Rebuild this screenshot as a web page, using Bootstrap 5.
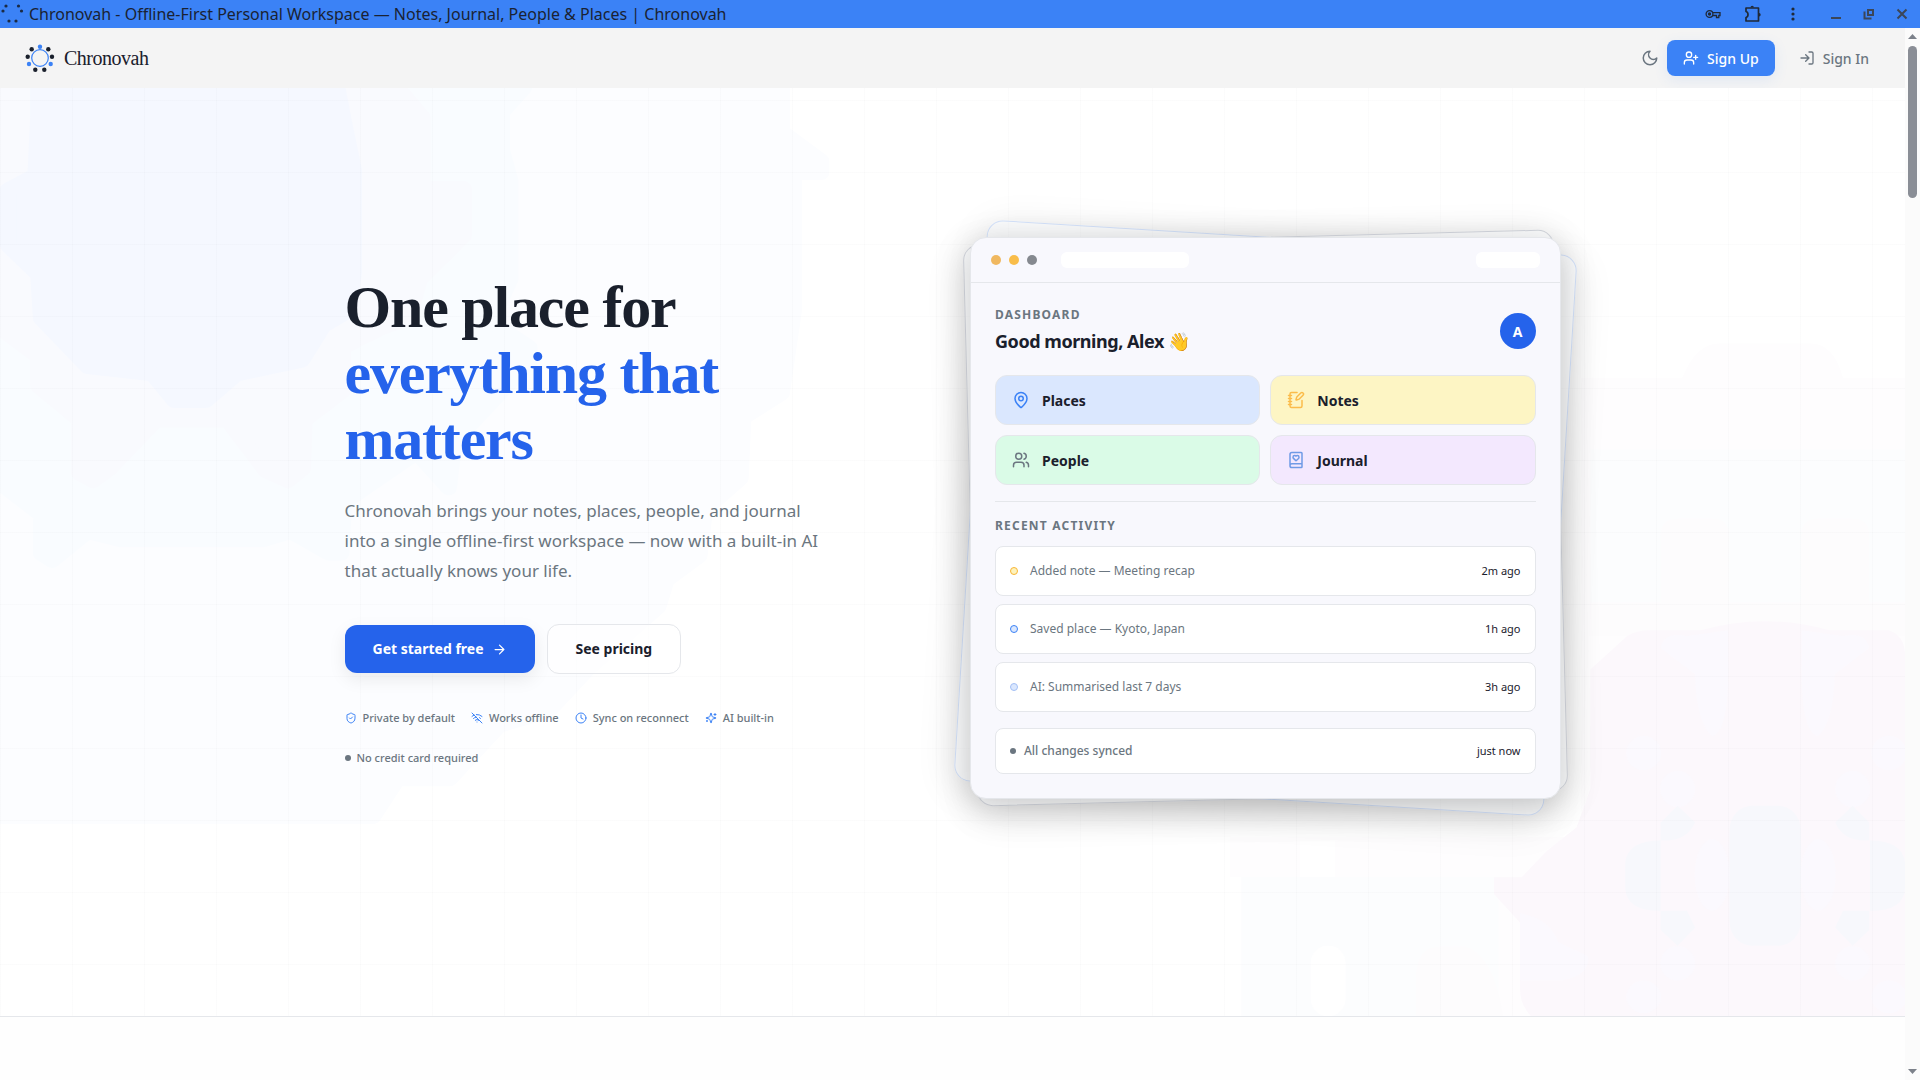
<!DOCTYPE html>
<html lang="en">
<head>
<meta charset="utf-8">
<meta name="viewport" content="width=device-width, initial-scale=1">
<title>Chronovah - Offline-First Personal Workspace</title>
<link href="https://cdn.jsdelivr.net/npm/bootstrap@5.3.0/dist/css/bootstrap.min.css" rel="stylesheet">
<style>
  :root { --ink: #1a202c; --muted: #6b7680; --accent: #3b82f6; --brand: #2563eb; --line: #e5e7eb; --panel: #f8f8fd; }
  body { font-family: "Noto Sans", sans-serif; color: var(--ink); background: #fefefe; }
  a { text-decoration: none; }
  .ico { fill: none; stroke: currentColor; stroke-width: 2; stroke-linecap: round; stroke-linejoin: round; flex: none; }

  .titlebar { height: 28px; padding-right: 2px; background: var(--accent); font-size: 16px; line-height: 28px; color: #1a2233; }
  .titlebar button { background: none; border: 0; padding: 0; display: flex; align-items: center; justify-content: center; height: 28px; color: #1f2937; }
  .title-text { padding-left: 5px; }
  .tool-btn { width: 40px; }
  .win-btn { width: 33px; }
  .win-group { margin-left: 6px; }

  .site-nav { height: 60px; background: #f4f4f4; padding: 0 20px 0 24px; }
  .brand-name { font-family: "Liberation Serif", serif; font-size: 20px; line-height: 24px; letter-spacing: -0.025em; color: var(--ink); }
  .theme-btn { width: 34px; height: 36px; background: none; border: 0; padding: 0; color: var(--muted); }
  .nav-cta { height: 36px; padding: 0 16px; border-radius: 8px; font-size: 14px; font-weight: 500; color: var(--muted); }
  .nav-cta.filled { background: var(--accent); color: #fff; box-shadow: 0 4px 14px rgba(59,130,246,.1); }

  .hero { padding: 149px 0 217px; border-bottom: 1px solid var(--line); overflow: hidden; background-color: #fff; }
  .hero-grid { inset: 0; background-position: 0 -60px; background-size: 72px 72px;
    background-image: linear-gradient(rgba(30,41,59,.014) 1px, transparent 1px), linear-gradient(90deg, rgba(30,41,59,.014) 1px, transparent 1px); }
  .glow-left { left: 0; top: 0; }
  .glow-right { right: 0; bottom: 0; }
  .hero-inner { max-width: 1280px; padding: 0 32px; gap: 35px; }
  .hero-inner > div { flex: 1 1 0; min-width: 0; }
  .hero-copy { max-width: 520px; }
  .hero h1 { font-family: "Liberation Serif", serif; font-weight: 700; font-size: 60px; line-height: 66px; letter-spacing: -0.02em; margin: 0 0 24px; }
  .hero h1 span { color: var(--brand); }
  .hero-text { font-size: 17px; line-height: 30px; color: var(--muted); max-width: 480px; margin: 0 0 38px; }
  .cta-group { gap: 12px; }
  .cta { border-radius: 12px; padding: 13px 28px; font-size: 14px; line-height: 22px; font-weight: 700; border: 0; }
  .cta-main { background: var(--brand); color: #fff; box-shadow: 0 6px 18px rgba(0,0,0,.08); }
  .cta-alt { background: rgba(255,255,255,.6); color: var(--ink); border: 1px solid var(--line); }
  .perks { font-size: 11px; line-height: 24px; font-weight: 500; color: var(--muted); gap: 16px; margin-top: 32px; }
  .perks li { display: flex; align-items: center; gap: 6px; }
  .perks svg { color: var(--accent); }
  .pip { width: 6px; height: 6px; border-radius: 50%; background: var(--muted); flex: none; }

  .backsheet { inset: 0; border-radius: 16px; border: 1px solid #d3d6dd; background: rgba(246,247,250,.4); box-shadow: 0 8px 40px rgba(0,0,0,.1); }
  .tilt-a { transform: rotate(3.5deg); border-color: #d5e3fb; }
  .tilt-b { transform: rotate(-1.5deg); }
  .mock { border-radius: 16px; border: 1px solid var(--line); background: var(--panel); box-shadow: 0 8px 36px rgba(0,0,0,.18); overflow: hidden; }
  .mock-bar { height: 45px; padding: 0 20px; border-bottom: 1px solid var(--line); gap: 8px; }
  .bar-dot { width: 10px; height: 10px; border-radius: 50%; }
  .bar-pill { height: 16px; border-radius: 6px; background: #fff; }
  .mock-body { padding: 24px; }
  .over { font-size: 12px; line-height: 16px; font-weight: 700; letter-spacing: 0.1em; color: var(--muted); }
  .hello { font-size: 18px; line-height: 28px; font-weight: 700; letter-spacing: -0.025em; }
  .avatar { width: 36px; height: 36px; border-radius: 50%; background: var(--brand); color: #fff; font-size: 14px; font-weight: 700; }
  .tiles { display: grid; grid-template-columns: 1fr 1fr; gap: 10px; margin-top: 20px; padding-bottom: 16px; border-bottom: 1px solid var(--line); }
  .tile { height: 50px; border: 1px solid var(--line); border-radius: 12px; padding: 0 16px; gap: 12px; font-size: 14px; font-weight: 700; color: var(--ink); }
  .feed-row { height: 50px; border: 1px solid var(--line); border-radius: 8px; background: #fff; padding: 0 14px; font-size: 12px; color: var(--muted); }
  .feed-row.short { height: 46px; font-weight: 500; }
  .feed-row time { font-size: 11px; font-weight: 400; color: var(--ink); }
  .ring { width: 8px; height: 8px; border-radius: 50%; border: 1px solid; flex: none; }

  .scroll-rail { width: 15px; background: #fbfbfb; }
  .scroll-thumb { width: 9px; height: 152px; border-radius: 5px; background: #8a8e96; }
</style>
</head>
<body>
<div class="d-flex flex-column min-vh-100">

  <header class="titlebar d-flex align-items-center">
    <svg width="24" height="24" viewBox="0 0 24 24" fill="#1a2a44" aria-hidden="true"><circle cx="6" cy="4" r="1.600"/><circle cx="18.500" cy="4" r="1.600"/><circle cx="3" cy="9" r="1.600"/><circle cx="21.500" cy="9" r="1.600"/><circle cx="9" cy="19" r="1.600"/><circle cx="16" cy="19" r="1.600"/></svg>
    <span class="title-text flex-grow-1 text-truncate">Chronovah - Offline-First Personal Workspace — Notes, Journal, People &amp; Places | Chronovah</span>
    <button class="tool-btn" aria-label="Passwords"><svg width="16" height="10" viewBox="0 0 16 10" fill="none" stroke="currentColor" stroke-width="1.300"><circle cx="4.500" cy="5" r="3.400"/><circle cx="4.500" cy="5" r="1" fill="currentColor"/><path d="M8 3.700h7v2.800h-1.200V8.500h-2.300v-2H8"/></svg></button>
    <button class="tool-btn" aria-label="Extensions"><svg width="18" height="18" viewBox="0 0 18 18" fill="none" stroke="currentColor" stroke-width="1.700" stroke-linejoin="round"><path d="M2 3h12.500v13H2v-3.500q2-.5 2-3t-2-3z"/><path d="M6.500 2.500a1.700 1.700 0 0 1 3.400 0zM15 8a1.700 1.700 0 0 1 0 3.400z" fill="currentColor" stroke="none"/></svg></button>
    <button class="tool-btn" aria-label="Menu"><svg width="4" height="14" viewBox="0 0 4 14" fill="currentColor"><circle cx="2" cy="2" r="1.600"/><circle cx="2" cy="7" r="1.600"/><circle cx="2" cy="12" r="1.600"/></svg></button>
    <div class="win-group d-flex">
      <button class="win-btn" aria-label="Minimize"><svg width="12" height="12" viewBox="0 0 12 12" stroke="#3b4658" stroke-width="2"><path d="M1 10h10"/></svg></button>
      <button class="win-btn" aria-label="Restore"><svg width="12" height="12" viewBox="0 0 12 12" fill="none" stroke="#3b4658" stroke-width="2"><path d="M5 2h5v5H5z"/><path d="M1.500 3.500v7h7"/></svg></button>
      <button class="win-btn" aria-label="Close"><svg width="12" height="12" viewBox="0 0 12 12" stroke="#3b4658" stroke-width="2"><path d="M1.500 1.500l9 9M10.500 1.500l-9 9"/></svg></button>
    </div>
  </header>

  <div class="d-flex flex-grow-1">
    <div class="flex-grow-1 overflow-hidden">
      <nav class="site-nav d-flex align-items-center">
        <a href="#" class="d-flex align-items-center gap-2">
          <svg width="32" height="32" viewBox="0 0 32 32" aria-hidden="true"><circle cx="16" cy="16" r="8.300" fill="none" stroke="#3b82f6" stroke-width="1.200"/><g fill="#3b82f6"><circle cx="16" cy="4.700" r="2.200"/><circle cx="5" cy="22" r="2.200"/><circle cx="26.700" cy="22" r="2.200"/></g><g fill="#1a202c"><circle cx="7.700" cy="7.300" r="2.200"/><circle cx="24.300" cy="7.300" r="2.200"/><circle cx="3.700" cy="14.700" r="2.200"/><circle cx="28" cy="14.700" r="2.200"/><circle cx="11.300" cy="27.700" r="2.200"/><circle cx="20.300" cy="27.700" r="2.200"/></g></svg>
          <span class="brand-name">Chronovah</span>
        </a>
        <button class="theme-btn ms-auto d-flex align-items-center justify-content-center" aria-label="Toggle theme"><svg class="ico" width="18" height="18" viewBox="0 0 24 24"><path d="M12 3a6 6 0 0 0 9 9 9 9 0 1 1-9-9Z"/></svg></button>
        <a href="#" class="nav-cta filled d-flex align-items-center gap-2"><svg class="ico" width="16" height="16" viewBox="0 0 24 24"><path d="M16 21v-2a4 4 0 0 0-4-4H6a4 4 0 0 0-4 4v2M19 8v6M22 11h-6"/><circle cx="9" cy="7" r="4"/></svg>Sign Up</a>
        <a href="#" class="nav-cta d-flex align-items-center gap-2 ms-2"><svg class="ico" width="16" height="16" viewBox="0 0 24 24"><path d="M15 3h4a2 2 0 0 1 2 2v14a2 2 0 0 1-2 2h-4M10 17l5-5-5-5M15 12H3"/></svg>Sign In</a>
      </nav>

      <section class="hero position-relative">
        <svg class="glow-left position-absolute" width="860" height="736" viewBox="0 0 1568 1518" preserveAspectRatio="none" aria-hidden="true" stroke-linejoin="round" stroke-width="30">
          <path fill="#fcfdff" stroke="#fcfdff" d="M0 1503H680L725 1425H820L910 1315 1000 1285 1070 1200 1200 1070 1215 1015 1275 965 1285 870 1350 805 1355 680 1425 630 1447 460V175H1497V150L1425 90V0H0Z"/>
          <path fill="#f9fcff" stroke="#f9fcff" d="M0 815 75 880V960L95 975 160 915 220 932H480L530 915 600 960H622L627 855 760 752 818 825 828 730 965 565V535L895 482 930 395V190L915 130V50L955 0H0Z"/>
          <path fill="#f9fafe" stroke="#f9fafe" d="M0 495 70 555V615L145 685V795L170 810 200 785 285 685H415L485 790 525 810 552 785 555 685 625 625V535L695 495 745 475 765 395 845 305V207H770V60L725 0H0Z"/>
          <path fill="#f5f8ff" stroke="#f5f8ff" d="M70 0V60L65 180 15 210V325L70 385 75 475 160 575 278 590 318 645H375L432 590 550 562 590 490 635 460 645 380V170L625 60 615 0Z"/>
        </svg>
        <svg class="glow-right position-absolute" width="705" height="686" viewBox="0 0 1535 1435" preserveAspectRatio="none" aria-hidden="true" stroke-linejoin="round">
          <path fill="#fefdfe" d="M830 100H1050Q1080 28 1130 28H1330Q1380 28 1400 100H1535V1435H90V1145H65V1060H830Z"/>
          <path fill="#fcfdfe" d="M850 250H1535V570H850zM90 1145H650V1435H90z"/>
          <path fill="#fdfcfd" d="M1003 430Q1003 395 1040 395H1115Q1152 395 1152 430V620H1003zM1309 430Q1309 395 1345 395H1420Q1457 395 1457 430V620H1309zM850 570H1535V640H850zM470 1360Q470 1290 520 1290H580Q640 1310 660 1435H470z"/>
          <path fill="#fcf8fc" d="M850 710 930 640Q950 628 980 628H1090Q1230 590 1370 628H1500Q1535 640 1535 680V1435H720Q697 1410 697 1380V1240L640 1180V1145H700L755 1090 820 1040 850 960Z"/>
          <path fill="#fbf9fe" d="M1003 665Q1010 630 1060 640L1150 628V700Q1152 840 1115 850 1080 820 1078 720ZM1457 665Q1450 630 1400 640L1310 628V700Q1308 840 1345 850 1380 820 1382 720Z"/>
          <g fill="#fbf9fe"><ellipse cx="966" cy="885" rx="38" ry="36"/><ellipse cx="1040" cy="960" rx="38" ry="38"/><ellipse cx="1421" cy="960" rx="38" ry="38"/><ellipse cx="1500" cy="885" rx="38" ry="36"/><ellipse cx="1115" cy="1140" rx="38" ry="75"/><ellipse cx="1346" cy="1140" rx="38" ry="75"/><ellipse cx="1040" cy="1325" rx="38" ry="36"/><ellipse cx="1421" cy="1325" rx="38" ry="36"/><ellipse cx="966" cy="1395" rx="38" ry="34"/><ellipse cx="1500" cy="1395" rx="38" ry="34"/><path d="M697 1220Q760 1230 780 1280L845 1310Q850 1350 790 1360H697Z"/></g>
          <g fill="#f7f8fc"><rect x="1153" y="995" width="155" height="293" rx="50"/><path d="M1003 1030 1040 995 1078 1030Q1060 1070 1003 1068zM1457 1030 1421 995 1383 1030Q1400 1070 1457 1068zM1003 1215H1060L1078 1250 1040 1288 1003 1255zM1457 1215H1400L1383 1250 1421 1288 1457 1255zM1003 1068V1215Q926 1215 926 1165V1115Q930 1068 1003 1068zM1459 1068V1215Q1535 1215 1535 1165V1115Q1530 1068 1459 1068z"/></g>
          <g fill="#fff"><rect x="218" y="1068" width="76" height="76"/><rect x="241" y="1288" width="76" height="147" rx="36"/></g>
        </svg>
        <div class="hero-grid position-absolute"></div>

        <div class="hero-inner mx-auto d-flex align-items-center position-relative">
          <div class="pt-2">
            <div class="hero-copy">
              <h1>One place for<br><span>everything that matters</span></h1>
              <p class="hero-text">Chronovah brings your notes, places, people, and journal into a single offline-first workspace — now with a built-in AI that actually knows your life.</p>
              <div class="cta-group d-flex align-items-center">
                <a href="#" class="btn cta cta-main d-flex align-items-center gap-2">Get started free<svg class="ico" width="15" height="15" viewBox="0 0 24 24"><path d="M5 12h14M12 5l7 7-7 7"/></svg></a>
                <a href="#" class="btn cta cta-alt">See pricing</a>
              </div>
              <ul class="perks list-unstyled d-flex flex-wrap mb-0">
                <li><svg class="ico" width="12" height="12" viewBox="0 0 24 24"><path d="M20 13c0 5-3.500 7.500-7.660 8.950a1 1 0 0 1-.67-.01C7.500 20.500 4 18 4 13V6a1 1 0 0 1 1-1c2 0 4.500-1.200 6.240-2.720a1.170 1.170 0 0 1 1.520 0C14.510 3.810 17 5 19 5a1 1 0 0 1 1 1zM9 12l2 2 4-4"/></svg>Private by default</li>
                <li><svg class="ico" width="12" height="12" viewBox="0 0 24 24"><path d="M12 20h.01M8.500 16.429a5 5 0 0 1 7 0M5 12.859a10 10 0 0 1 5.170-2.690M19 12.859a10 10 0 0 0-2.007-1.523M2 8.820a15 15 0 0 1 4.177-2.643M22 8.820a15 15 0 0 0-11.288-3.764M2 2l20 20"/></svg>Works offline</li>
                <li><svg class="ico" width="12" height="12" viewBox="0 0 24 24"><circle cx="12" cy="12" r="10"/><path d="M12 6v6l4 2"/></svg>Sync on reconnect</li>
                <li><svg class="ico" width="12" height="12" viewBox="0 0 24 24"><path d="M9.937 15.500A2 2 0 0 0 8.500 14.063l-6.135-1.582a.5.5 0 0 1 0-.962L8.500 9.936A2 2 0 0 0 9.937 8.500l1.582-6.135a.5.5 0 0 1 .963 0L14.063 8.500A2 2 0 0 0 15.500 9.937l6.135 1.581a.5.5 0 0 1 0 .964L15.500 14.063a2 2 0 0 0-1.437 1.437l-1.582 6.135a.5.5 0 0 1-.963 0zM20 3v4M22 5h-4M4 17v2M5 18H3"/></svg>AI built-in</li>
                <li><span class="pip"></span>No credit card required</li>
              </ul>
            </div>
          </div>

          <div class="position-relative">
            <div class="backsheet tilt-a position-absolute"></div>
            <div class="backsheet tilt-b position-absolute"></div>
            <div class="mock position-relative">
              <div class="mock-bar d-flex align-items-center">
                <span class="bar-dot" style="background:#f0b860"></span><span class="bar-dot" style="background:#f9bd4a"></span><span class="bar-dot" style="background:#85898f"></span>
                <span class="bar-pill ms-3" style="width:128px"></span><span class="bar-pill ms-auto" style="width:64px"></span>
              </div>
              <div class="mock-body">
                <div class="d-flex align-items-center justify-content-between">
                  <div><div class="over">DASHBOARD</div><div class="hello mt-1">Good morning, Alex 👋</div></div>
                  <div class="avatar d-flex align-items-center justify-content-center">A</div>
                </div>
                <div class="tiles">
                  <a href="#" class="tile d-flex align-items-center" style="background:#dae7fe"><svg class="ico" style="color:#3b82f6" width="18" height="18" viewBox="0 0 24 24"><path d="M20 10c0 4.993-5.539 10.193-7.399 11.799a1 1 0 0 1-1.202 0C9.539 20.193 4 14.993 4 10a8 8 0 0 1 16 0"/><circle cx="12" cy="10" r="3"/></svg>Places</a>
                  <a href="#" class="tile d-flex align-items-center" style="background:#fdf5c4"><svg class="ico" style="color:#fbbc4b" width="18" height="18" viewBox="0 0 24 24"><path d="M13.400 2H6a2 2 0 0 0-2 2v16a2 2 0 0 0 2 2h12a2 2 0 0 0 2-2v-7.400M2 6h4M2 10h4M2 14h4M2 18h4M21.378 5.626a1 1 0 1 0-3.004-3.004l-5.010 5.012a2 2 0 0 0-.506.854l-.837 2.870a.5.5 0 0 0 .62.62l2.870-.837a2 2 0 0 0 .854-.506z"/></svg>Notes</a>
                  <a href="#" class="tile d-flex align-items-center" style="background:#dafbe7"><svg class="ico" style="color:#6b7680" width="18" height="18" viewBox="0 0 24 24"><path d="M16 21v-2a4 4 0 0 0-4-4H6a4 4 0 0 0-4 4v2M22 21v-2a4 4 0 0 0-3-3.870M16 3.130a4 4 0 0 1 0 7.750"/><circle cx="9" cy="7" r="4"/></svg>People</a>
                  <a href="#" class="tile d-flex align-items-center" style="background:#f3e8fe"><svg class="ico" style="color:#6f9ae6" width="18" height="18" viewBox="0 0 24 24"><path d="M4 19.500v-15A2.500 2.500 0 0 1 6.500 2H19a1 1 0 0 1 1 1v18a1 1 0 0 1-1 1H6.500a1 1 0 0 1 0-5H20M16 8.200A2.220 2.220 0 0 0 13.800 6c-.8 0-1.400.3-1.800.9-.4-.6-1-.9-1.800-.9A2.220 2.220 0 0 0 8 8.200c0 .6.3 1.200.7 1.600A226.650 226.650 0 0 0 12 13a404 404 0 0 0 3.300-3.100 2.413 2.413 0 0 0 .7-1.700"/></svg>Journal</a>
                </div>
                <div class="over mt-3">RECENT ACTIVITY</div>
                <div class="d-flex flex-column gap-2 mt-2 pt-1">
                  <div class="feed-row d-flex align-items-center"><span class="ring" style="color:#f9b534;background:#fdf3bd"></span><span class="ms-2 ps-1">Added note — Meeting recap</span><time class="ms-auto">2m ago</time></div>
                  <div class="feed-row d-flex align-items-center"><span class="ring" style="color:#3b82f6;background:#dae7fe"></span><span class="ms-2 ps-1">Saved place — Kyoto, Japan</span><time class="ms-auto">1h ago</time></div>
                  <div class="feed-row d-flex align-items-center"><span class="ring" style="color:#a3bff5;background:#dae7fe"></span><span class="ms-2 ps-1">AI: Summarised last 7 days</span><time class="ms-auto">3h ago</time></div>
                  <div class="feed-row short d-flex align-items-center mt-2"><span class="pip"></span><span class="ms-2">All changes synced</span><time class="ms-auto">just now</time></div>
                </div>
              </div>
            </div>
          </div>
        </div>
      </section>
    </div>

    <div class="scroll-rail d-flex flex-column align-items-center" aria-hidden="true">
      <svg class="mt-1" width="9" height="10" viewBox="0 0 9 10" fill="#7c818a"><path d="M0 7l4.500-5L9 7z"/></svg>
      <div class="scroll-thumb mt-1"></div>
      <svg class="mt-auto mb-1" width="9" height="10" viewBox="0 0 9 10" fill="#7c818a"><path d="M0 3l4.500 5L9 3z"/></svg>
    </div>
  </div>
</div>
<script src="https://cdn.jsdelivr.net/npm/bootstrap@5.3.0/dist/js/bootstrap.bundle.min.js"></script>
</body>
</html>
